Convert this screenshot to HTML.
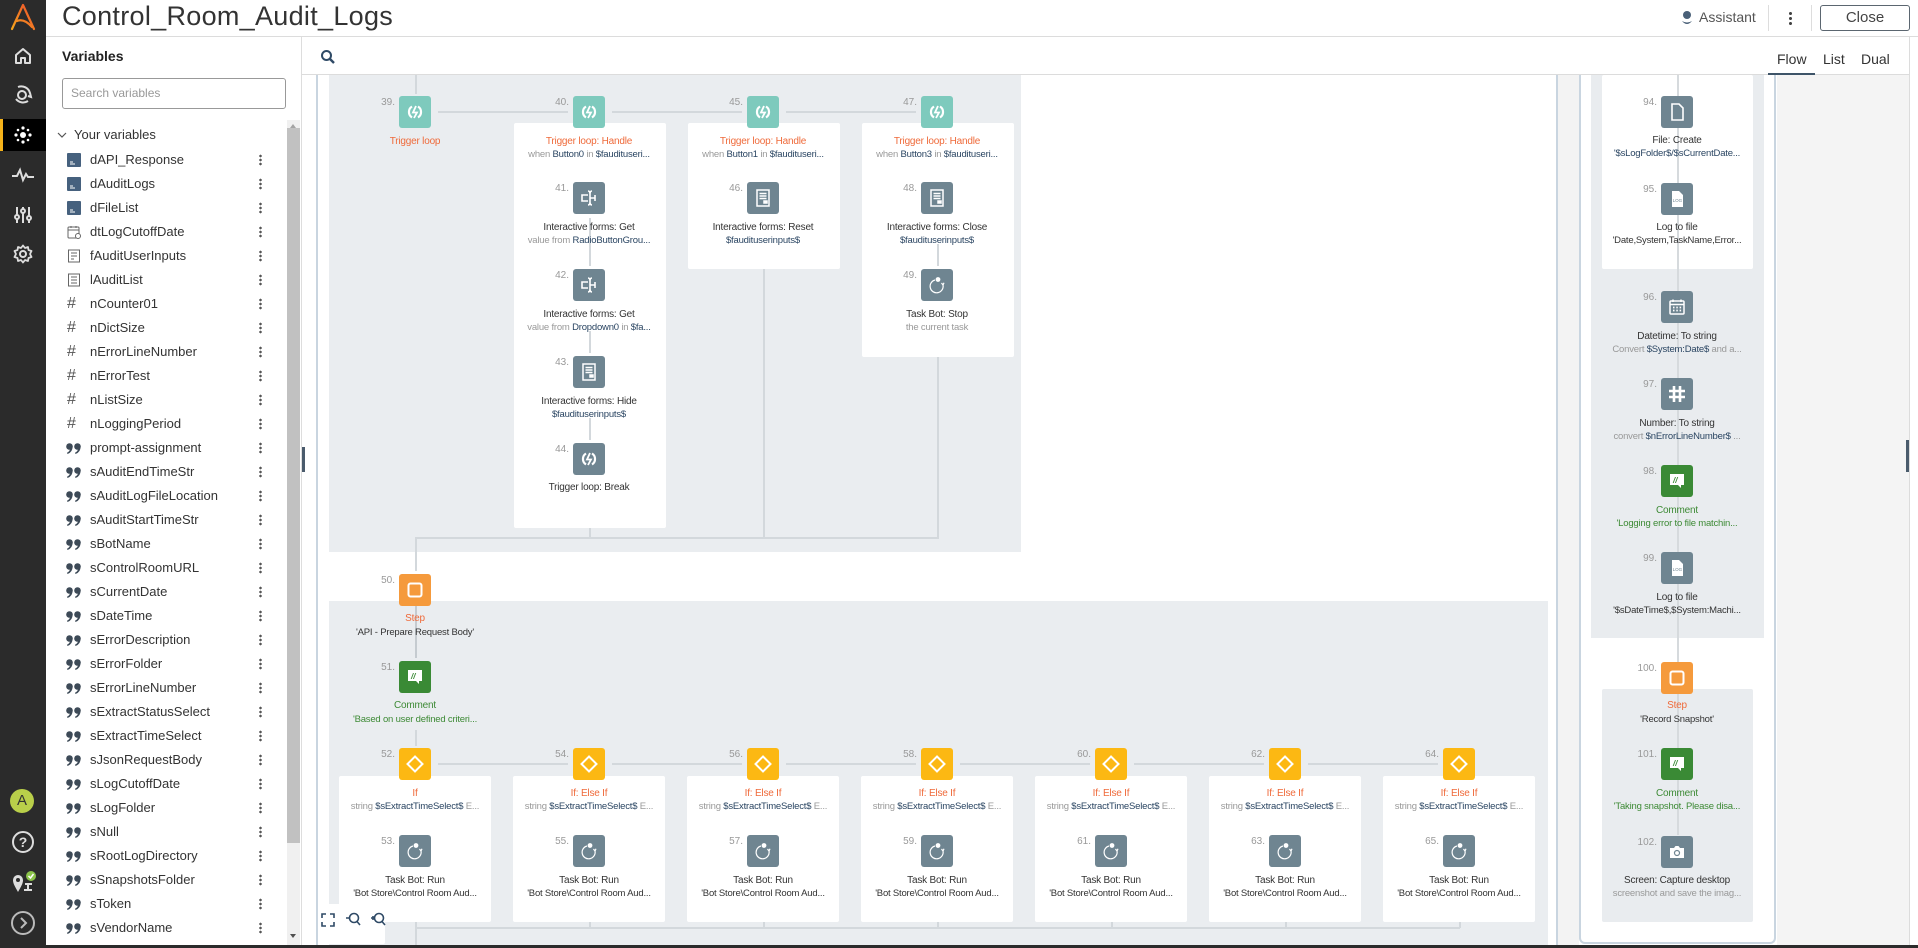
<!DOCTYPE html>
<html><head><meta charset="utf-8">
<style>
*{margin:0;padding:0;box-sizing:border-box}
body{width:1918px;height:948px;overflow:hidden;position:relative;background:#fff;font-family:"Liberation Sans",sans-serif;color:#333}
.a{position:absolute}
.nav{left:0;top:0;width:46px;height:948px;background:#2b2b2b}
.ln{position:absolute;background:#d3d8dc}
.ic{position:absolute;width:32px;height:32px;border-radius:3px}
.ic svg{position:absolute;left:6px;top:6px;width:20px;height:20px}
.teal{background:#7ecabd}.gray{background:#6f8591}.orng{background:#f59a3c}.grn{background:#3a8a35}.yel{background:#fcb813}
.num{position:absolute;width:30px;text-align:right;font-size:10px;color:#999}
.t{position:absolute;width:170px;text-align:center;font-size:10px;line-height:12px;color:#333;white-space:nowrap;letter-spacing:-0.2px}
.s{position:absolute;width:170px;text-align:center;font-size:9.5px;line-height:12px;color:#999;white-space:nowrap;letter-spacing:-0.2px}
.o{color:#ef6a3a}.g{color:#3d8a35}.v{color:#2a4562}.d{color:#333}
.card{position:absolute;background:#fff;border-radius:2px}
.var{position:absolute;left:62px;height:24px;width:215px;font-size:13px;line-height:24px;color:#333}
.var .vi{position:absolute;left:5px;top:5px;width:14px;height:14px}
.var .q{position:absolute;left:4px;top:7px;width:16px;height:11px}
.var span.n{position:absolute;left:28px}
.var .k{position:absolute;left:197px;top:6px;width:3px;height:12px;background:radial-gradient(circle,#555 1.2px,transparent 1.4px) 0 0/3px 4px}
</style></head><body>
<svg width="0" height="0" style="position:absolute"><defs><g id="qq" fill="#3d4a57"><circle cx="3.5" cy="3.5" r="3.3"/><path d="M6.5 3.5 Q6.8 9 1.5 11 L1 9.8 Q4 8.2 4 5.5Z"/><circle cx="11.5" cy="3.5" r="3.3"/><path d="M14.5 3.5 Q14.8 9 9.5 11 L9 9.8 Q12 8.2 12 5.5Z"/></g></defs></svg>

<!-- nav -->
<div class="a nav"></div>
<svg class="a" style="left:8px;top:2px" width="30" height="30" viewBox="0 0 30 30"><defs><linearGradient id="lg" x1="0" y1="1" x2="1" y2="0"><stop offset="0" stop-color="#f7a51c"/><stop offset="1" stop-color="#ee4d2d"/></linearGradient></defs><path d="M4 27 L15 3 L26 27 M9 19 Q16 16 24 25" stroke="url(#lg)" stroke-width="2.2" fill="none" stroke-linecap="round" stroke-linejoin="round"/></svg>
<svg class="a" style="left:13px;top:47px" width="20" height="18" viewBox="0 0 20 18"><path d="M3 8 L10 2 L17 8 V16 H12 V11 H8 V16 H3 Z" stroke="#ddd" stroke-width="2" fill="none" stroke-linejoin="round"/></svg>
<svg class="a" style="left:13px;top:84px" width="20" height="20" viewBox="0 0 20 20"><circle cx="9" cy="11" r="4" stroke="#ddd" stroke-width="2" fill="none"/><path d="M5 3 A9 9 0 0 1 17 9 M3 15 A9 9 0 0 0 15 17 M17 9 l1 4 -3 -1" stroke="#ddd" stroke-width="2" fill="none"/></svg>
<div class="a" style="left:0;top:119px;width:46px;height:32px;background:#000"></div>
<div class="a" style="left:0;top:119px;width:3px;height:32px;background:#f5b21a"></div>
<svg class="a" style="left:13px;top:125px" width="20" height="20" viewBox="0 0 20 20" fill="#fff"><circle cx="10" cy="10" r="3"/><circle cx="10" cy="3" r="1.6"/><circle cx="10" cy="17" r="1.6"/><circle cx="3" cy="10" r="1.6"/><circle cx="17" cy="10" r="1.6"/><circle cx="5" cy="5" r="1.3"/><circle cx="15" cy="5" r="1.3"/><circle cx="5" cy="15" r="1.3"/><circle cx="15" cy="15" r="1.3"/></svg>
<svg class="a" style="left:11px;top:167px" width="24" height="16" viewBox="0 0 24 16"><path d="M1 9 H6 L9 3 L12 13 L15 7 L17 10 H23" stroke="#ddd" stroke-width="2" fill="none"/></svg>
<svg class="a" style="left:13px;top:205px" width="20" height="20" viewBox="0 0 20 20" stroke="#ddd" stroke-width="2" fill="none"><path d="M4 2V18M10 2V18M16 2V18"/><circle cx="4" cy="12" r="2" fill="#2b2b2b"/><circle cx="10" cy="6" r="2" fill="#2b2b2b"/><circle cx="16" cy="13" r="2" fill="#2b2b2b"/></svg>
<svg class="a" style="left:13px;top:244px" width="20" height="20" viewBox="0 0 20 20"><circle cx="10" cy="10" r="3" stroke="#ddd" stroke-width="2" fill="none"/><path d="M10 1.5 L12 4 L15 3 L15.5 6 L18.5 7 L17 10 L18.5 13 L15.5 14 L15 17 L12 16 L10 18.5 L8 16 L5 17 L4.5 14 L1.5 13 L3 10 L1.5 7 L4.5 6 L5 3 L8 4 Z" stroke="#ddd" stroke-width="1.8" fill="none" stroke-linejoin="round"/></svg>
<div class="a" style="left:10px;top:789px;width:24px;height:24px;border-radius:50%;background:#b9cf4a;color:#333;font-size:15px;text-align:center;line-height:24px">A</div>
<div class="a" style="left:12px;top:831px;width:22px;height:22px;border-radius:50%;border:2px solid #ddd;color:#ddd;font-size:14px;font-weight:bold;text-align:center;line-height:18px">?</div>
<svg class="a" style="left:11px;top:870px" width="26" height="24" viewBox="0 0 26 24"><path d="M7 22 C3 15 2 13 2 10 A5 5 0 0 1 12 10 C12 13 11 15 7 22Z" fill="#ddd"/><circle cx="7" cy="10" r="2" fill="#2b2b2b"/><path d="M14 14 H21 M17 14 V20 M13 20 H21" stroke="#ddd" stroke-width="2"/><circle cx="20" cy="6" r="5" fill="#8bc34a"/><path d="M17.5 6 L19.5 8 L22.5 4" stroke="#fff" stroke-width="1.5" fill="none"/></svg>
<div class="a" style="left:11px;top:911px;width:24px;height:24px;border-radius:50%;border:2px solid #bbb"></div>
<svg class="a" style="left:18px;top:917px" width="10" height="12" viewBox="0 0 10 12"><path d="M3 1 L8 6 L3 11" stroke="#bbb" stroke-width="2" fill="none"/></svg>

<!-- header -->
<div class="a" style="left:46px;top:0;width:1872px;height:37px;border-bottom:1px solid #dcdcdc;background:#fff"></div>
<div class="a" style="left:62px;top:1px;font-size:27px;color:#333;letter-spacing:0.3px">Control_Room_Audit_Logs</div>
<svg class="a" style="left:1681px;top:10px" width="12" height="16" viewBox="0 0 12 16"><circle cx="6" cy="5" r="4" fill="#4a6078"/><path d="M1 11 Q6 17 11 11 Q6 14 1 11Z" fill="#4a6078"/></svg>
<div class="a" style="left:1699px;top:9px;font-size:14px;color:#555">Assistant</div>
<div class="a" style="left:1768px;top:5px;width:1px;height:26px;background:#ddd"></div>
<div class="a" style="left:1789px;top:11px;width:3px;height:14px;background:radial-gradient(circle,#444 1.4px,transparent 1.6px) 0 0/3px 5px"></div>
<div class="a" style="left:1811px;top:5px;width:1px;height:26px;background:#ddd"></div>
<div class="a" style="left:1820px;top:5px;width:90px;height:26px;border:1px solid #5b6670;border-radius:3px;font-size:15px;text-align:center;line-height:24px;color:#444">Close</div>

<!-- variables panel -->
<div class="a" style="left:301px;top:37px;width:1px;height:911px;background:#ddd"></div>
<div class="a" style="left:62px;top:48px;font-size:14px;font-weight:bold;color:#222">Variables</div>
<div class="a" style="left:62px;top:78px;width:224px;height:31px;border:1px solid #999;border-radius:3px;font-size:12px;color:#999;padding:7px 8px">Search variables</div>
<div class="a" style="left:287px;top:120px;width:13px;height:825px;background:#f0f0f0"></div>
<div class="a" style="left:287px;top:128px;width:13px;height:715px;background:#c1c1c1"></div>
<div class="a" style="left:290px;top:124px;width:0;height:0;border:3.5px solid transparent;border-bottom:4px solid #a3a3a3;border-top:0"></div>
<div class="a" style="left:290px;top:934px;width:0;height:0;border:3.5px solid transparent;border-top:4px solid #505050;border-bottom:0"></div>
<svg class="a" style="left:57px;top:131px" width="10" height="8" viewBox="0 0 10 8"><path d="M1 2 L5 6 L9 2" stroke="#555" stroke-width="1.2" fill="none"/></svg>
<div class="a" style="left:74px;top:127px;font-size:13px;color:#333">Your variables</div>

<div id="vars">
<div class="var" style="top:148px"><svg class="vi" viewBox="0 0 14 14"><rect width="14" height="14" rx="1" fill="#46617e"/><path d="M3 9h3M3 11h5" stroke="#fff" stroke-width="1"/></svg><span class="n">dAPI_Response</span><i class="k"></i></div>
<div class="var" style="top:172px"><svg class="vi" viewBox="0 0 14 14"><rect width="14" height="14" rx="1" fill="#46617e"/><path d="M3 9h3M3 11h5" stroke="#fff" stroke-width="1"/></svg><span class="n">dAuditLogs</span><i class="k"></i></div>
<div class="var" style="top:196px"><svg class="vi" viewBox="0 0 14 14"><rect width="14" height="14" rx="1" fill="#46617e"/><path d="M3 9h3M3 11h5" stroke="#fff" stroke-width="1"/></svg><span class="n">dFileList</span><i class="k"></i></div>
<div class="var" style="top:220px"><svg class="vi" viewBox="0 0 14 14" fill="none" stroke="#666"><rect x="1" y="2" width="11" height="11" rx="1"/><path d="M1 5h11M4 1v2M9 1v2"/><circle cx="11" cy="11" r="2.5" fill="#fff"/></svg><span class="n">dtLogCutoffDate</span><i class="k"></i></div>
<div class="var" style="top:244px"><svg class="vi" viewBox="0 0 14 14" fill="none" stroke="#666"><rect x="1.5" y="1" width="11" height="12"/><path d="M4 4h6M4 7h6M4 10h3"/></svg><span class="n">fAuditUserInputs</span><i class="k"></i></div>
<div class="var" style="top:268px"><svg class="vi" viewBox="0 0 14 14" fill="none" stroke="#666"><rect x="1.5" y="1" width="11" height="12"/><path d="M4 4h6M4 7h6M4 10h6"/></svg><span class="n">lAuditList</span><i class="k"></i></div>
<div class="var" style="top:292px"><span class="a" style="left:5px;top:0;font-size:16px;color:#555">#</span><span class="n">nCounter01</span><i class="k"></i></div>
<div class="var" style="top:316px"><span class="a" style="left:5px;top:0;font-size:16px;color:#555">#</span><span class="n">nDictSize</span><i class="k"></i></div>
<div class="var" style="top:340px"><span class="a" style="left:5px;top:0;font-size:16px;color:#555">#</span><span class="n">nErrorLineNumber</span><i class="k"></i></div>
<div class="var" style="top:364px"><span class="a" style="left:5px;top:0;font-size:16px;color:#555">#</span><span class="n">nErrorTest</span><i class="k"></i></div>
<div class="var" style="top:388px"><span class="a" style="left:5px;top:0;font-size:16px;color:#555">#</span><span class="n">nListSize</span><i class="k"></i></div>
<div class="var" style="top:412px"><span class="a" style="left:5px;top:0;font-size:16px;color:#555">#</span><span class="n">nLoggingPeriod</span><i class="k"></i></div>
<div class="var" style="top:436px"><svg class="q" viewBox="0 0 16 11"><use href="#qq"/></svg><span class="n">prompt-assignment</span><i class="k"></i></div>
<div class="var" style="top:460px"><svg class="q" viewBox="0 0 16 11"><use href="#qq"/></svg><span class="n">sAuditEndTimeStr</span><i class="k"></i></div>
<div class="var" style="top:484px"><svg class="q" viewBox="0 0 16 11"><use href="#qq"/></svg><span class="n">sAuditLogFileLocation</span><i class="k"></i></div>
<div class="var" style="top:508px"><svg class="q" viewBox="0 0 16 11"><use href="#qq"/></svg><span class="n">sAuditStartTimeStr</span><i class="k"></i></div>
<div class="var" style="top:532px"><svg class="q" viewBox="0 0 16 11"><use href="#qq"/></svg><span class="n">sBotName</span><i class="k"></i></div>
<div class="var" style="top:556px"><svg class="q" viewBox="0 0 16 11"><use href="#qq"/></svg><span class="n">sControlRoomURL</span><i class="k"></i></div>
<div class="var" style="top:580px"><svg class="q" viewBox="0 0 16 11"><use href="#qq"/></svg><span class="n">sCurrentDate</span><i class="k"></i></div>
<div class="var" style="top:604px"><svg class="q" viewBox="0 0 16 11"><use href="#qq"/></svg><span class="n">sDateTime</span><i class="k"></i></div>
<div class="var" style="top:628px"><svg class="q" viewBox="0 0 16 11"><use href="#qq"/></svg><span class="n">sErrorDescription</span><i class="k"></i></div>
<div class="var" style="top:652px"><svg class="q" viewBox="0 0 16 11"><use href="#qq"/></svg><span class="n">sErrorFolder</span><i class="k"></i></div>
<div class="var" style="top:676px"><svg class="q" viewBox="0 0 16 11"><use href="#qq"/></svg><span class="n">sErrorLineNumber</span><i class="k"></i></div>
<div class="var" style="top:700px"><svg class="q" viewBox="0 0 16 11"><use href="#qq"/></svg><span class="n">sExtractStatusSelect</span><i class="k"></i></div>
<div class="var" style="top:724px"><svg class="q" viewBox="0 0 16 11"><use href="#qq"/></svg><span class="n">sExtractTimeSelect</span><i class="k"></i></div>
<div class="var" style="top:748px"><svg class="q" viewBox="0 0 16 11"><use href="#qq"/></svg><span class="n">sJsonRequestBody</span><i class="k"></i></div>
<div class="var" style="top:772px"><svg class="q" viewBox="0 0 16 11"><use href="#qq"/></svg><span class="n">sLogCutoffDate</span><i class="k"></i></div>
<div class="var" style="top:796px"><svg class="q" viewBox="0 0 16 11"><use href="#qq"/></svg><span class="n">sLogFolder</span><i class="k"></i></div>
<div class="var" style="top:820px"><svg class="q" viewBox="0 0 16 11"><use href="#qq"/></svg><span class="n">sNull</span><i class="k"></i></div>
<div class="var" style="top:844px"><svg class="q" viewBox="0 0 16 11"><use href="#qq"/></svg><span class="n">sRootLogDirectory</span><i class="k"></i></div>
<div class="var" style="top:868px"><svg class="q" viewBox="0 0 16 11"><use href="#qq"/></svg><span class="n">sSnapshotsFolder</span><i class="k"></i></div>
<div class="var" style="top:892px"><svg class="q" viewBox="0 0 16 11"><use href="#qq"/></svg><span class="n">sToken</span><i class="k"></i></div>
<div class="var" style="top:916px"><svg class="q" viewBox="0 0 16 11"><use href="#qq"/></svg><span class="n">sVendorName</span><i class="k"></i></div>
</div>

<!-- canvas toolbar -->
<div class="a" style="left:302px;top:74px;width:1607px;height:1px;background:#dcdcdc"></div>
<svg class="a" style="left:320px;top:49px" width="16" height="16" viewBox="0 0 16 16"><circle cx="6.5" cy="6.5" r="4.5" stroke="#2f4a66" stroke-width="2" fill="none"/><path d="M10 10 L14 14" stroke="#2f4a66" stroke-width="2.4"/></svg>
<div class="a" style="left:1777px;top:51px;font-size:14px;color:#333">Flow</div>
<div class="a" style="left:1823px;top:51px;font-size:14px;color:#333">List</div>
<div class="a" style="left:1861px;top:51px;font-size:14px;color:#333">Dual</div>
<div class="a" style="left:1768px;top:73px;width:47px;height:2px;background:#3e5468"></div>
<div class="a" style="left:1909px;top:37px;width:1px;height:911px;background:#dcdcdc"></div>

<!-- canvas frame -->
<div class="a" style="left:316px;top:75px;width:2px;height:873px;background:#c9d5e0"></div>
<div class="a" style="left:302px;top:447px;width:3px;height:25px;background:#4a5b6c"></div>
<div class="a" style="left:1556px;top:75px;width:2px;height:873px;background:#c9d5e0"></div>
<div class="a" style="left:1558px;top:75px;width:21px;height:873px;background:#f3f3f3"></div>
<div class="a" style="left:1579px;top:75px;width:197px;height:869px;border:2px solid #c9d5e0;border-top:none;border-radius:0 0 6px 6px;background:#fff"></div>
<div class="a" style="left:1777px;top:75px;width:132px;height:873px;background:#f4f4f4"></div>
<div class="a" style="left:1906px;top:440px;width:3px;height:32px;background:#4a5b6c"></div>

<!-- top container -->
<div class="a" style="left:329px;top:75px;width:692px;height:477px;background:#eaedf0"></div>
<div class="card" style="left:514px;top:123px;width:152px;height:405px"></div>
<div class="card" style="left:688px;top:123px;width:152px;height:146px"></div>
<div class="card" style="left:862px;top:123px;width:152px;height:234px"></div>
<div class="ln" style="left:415px;top:75px;width:1.5px;height:19px"></div>
<div class="ln" style="left:438px;top:111px;width:130px;height:1.5px"></div>
<div class="ln" style="left:612px;top:111px;width:130px;height:1.5px"></div>
<div class="ln" style="left:786px;top:111px;width:130px;height:1.5px"></div>
<div class="ln" style="left:589px;top:218px;width:1.5px;height:48px"></div>
<div class="ln" style="left:589px;top:331px;width:1.5px;height:22px"></div>
<div class="ln" style="left:589px;top:418px;width:1.5px;height:22px"></div>
<div class="ln" style="left:937px;top:244px;width:1.5px;height:22px"></div>
<div class="ln" style="left:589px;top:528px;width:1.5px;height:10px"></div>
<div class="ln" style="left:763px;top:269px;width:1.5px;height:269px"></div>
<div class="ln" style="left:937px;top:357px;width:1.5px;height:181px"></div>
<div class="ln" style="left:415px;top:537px;width:524px;height:1.5px"></div>
<div class="ln" style="left:415px;top:537px;width:1.5px;height:34px"></div>

<!-- bottom container -->
<div class="a" style="left:329px;top:601px;width:1219px;height:347px;background:#eaedf0"></div>
<div class="ln" style="left:415px;top:606px;width:1.5px;height:52px;background:#c5cbd0"></div>
<div class="ln" style="left:415px;top:730px;width:1.5px;height:16px"></div>
<div class="card" style="left:339px;top:776px;width:152px;height:146px"></div>
<div class="card" style="left:513px;top:776px;width:152px;height:146px"></div>
<div class="card" style="left:687px;top:776px;width:152px;height:146px"></div>
<div class="card" style="left:861px;top:776px;width:152px;height:146px"></div>
<div class="card" style="left:1035px;top:776px;width:152px;height:146px"></div>
<div class="card" style="left:1209px;top:776px;width:152px;height:146px"></div>
<div class="card" style="left:1383px;top:776px;width:152px;height:146px"></div>
<div class="ln" style="left:438px;top:763px;width:130px;height:1.5px"></div>
<div class="ln" style="left:612px;top:763px;width:130px;height:1.5px"></div>
<div class="ln" style="left:786px;top:763px;width:130px;height:1.5px"></div>
<div class="ln" style="left:960px;top:763px;width:130px;height:1.5px"></div>
<div class="ln" style="left:1134px;top:763px;width:130px;height:1.5px"></div>
<div class="ln" style="left:1308px;top:763px;width:130px;height:1.5px"></div>
<div class="ln" style="left:415px;top:927px;width:1045px;height:1.5px"></div>
<div class="ln" style="left:415px;top:922px;width:1.5px;height:26px"></div>
<div class="ln" style="left:589px;top:922px;width:1.5px;height:6px"></div>
<div class="ln" style="left:763px;top:922px;width:1.5px;height:6px"></div>
<div class="ln" style="left:937px;top:922px;width:1.5px;height:6px"></div>
<div class="ln" style="left:1111px;top:922px;width:1.5px;height:6px"></div>
<div class="ln" style="left:1285px;top:922px;width:1.5px;height:6px"></div>
<div class="ln" style="left:1459px;top:922px;width:1.5px;height:6px"></div>

<!-- right pane containers -->
<div class="a" style="left:1591px;top:75px;width:173px;height:563px;background:#e9ecef"></div>
<div class="card" style="left:1602px;top:75px;width:151px;height:194px"></div>
<div class="a" style="left:1602px;top:689px;width:151px;height:233px;background:#e9ecef;border-radius:2px"></div>
<div class="ln" style="left:1677px;top:75px;width:1.5px;height:760px;background:#d6dadd"></div>

<!-- NODES -->
<div class="num" style="left:365px;top:97px">39.</div><div class="ic teal" style="left:399px;top:96px"><svg viewBox="0 0 20 20" fill="none" stroke="#fff" stroke-width="2.2"><path d="M7 4.5 A6.5 6.5 0 0 0 7 15.5 M13 4.5 A6.5 6.5 0 0 1 13 15.5"/><path d="M11 4 L8 10.5 H12 L9 16" stroke-width="1.8"/></svg></div>
<div class="t o" style="left:330px;top:136px">Trigger loop</div>

<div class="num" style="left:539px;top:97px">40.</div><div class="ic teal" style="left:573px;top:96px"><svg viewBox="0 0 20 20" fill="none" stroke="#fff" stroke-width="2.2"><path d="M7 4.5 A6.5 6.5 0 0 0 7 15.5 M13 4.5 A6.5 6.5 0 0 1 13 15.5"/><path d="M11 4 L8 10.5 H12 L9 16" stroke-width="1.8"/></svg></div>
<div class="t o" style="left:504px;top:136px">Trigger loop: Handle</div>
<div class="s" style="left:504px;top:149px">when <span class="v">Button0</span> in <span class="v">$faudituseri...</span></div>

<div class="num" style="left:713px;top:97px">45.</div><div class="ic teal" style="left:747px;top:96px"><svg viewBox="0 0 20 20" fill="none" stroke="#fff" stroke-width="2.2"><path d="M7 4.5 A6.5 6.5 0 0 0 7 15.5 M13 4.5 A6.5 6.5 0 0 1 13 15.5"/><path d="M11 4 L8 10.5 H12 L9 16" stroke-width="1.8"/></svg></div>
<div class="t o" style="left:678px;top:136px">Trigger loop: Handle</div>
<div class="s" style="left:678px;top:149px">when <span class="v">Button1</span> in <span class="v">$faudituseri...</span></div>

<div class="num" style="left:887px;top:97px">47.</div><div class="ic teal" style="left:921px;top:96px"><svg viewBox="0 0 20 20" fill="none" stroke="#fff" stroke-width="2.2"><path d="M7 4.5 A6.5 6.5 0 0 0 7 15.5 M13 4.5 A6.5 6.5 0 0 1 13 15.5"/><path d="M11 4 L8 10.5 H12 L9 16" stroke-width="1.8"/></svg></div>
<div class="t o" style="left:852px;top:136px">Trigger loop: Handle</div>
<div class="s" style="left:852px;top:149px">when <span class="v">Button3</span> in <span class="v">$faudituseri...</span></div>

<div class="num" style="left:539px;top:183px">41.</div><div class="ic gray" style="left:573px;top:182px"><svg viewBox="0 0 20 20" fill="none" stroke="#fff" stroke-width="1.6"><path d="M9 7 H3 V13 H9 M13 3 Q11 3 11 6 V14 Q11 17 13 17 M9 3 Q11 3 11 6 M9 17 Q11 17 11 14 M11 10 H16 V7 M11 10 H16 V13"/></svg></div>
<div class="t d" style="left:504px;top:222px">Interactive forms: Get</div>
<div class="s" style="left:504px;top:235px">value from <span class="v">RadioButtonGrou...</span></div>

<div class="num" style="left:539px;top:270px">42.</div><div class="ic gray" style="left:573px;top:269px"><svg viewBox="0 0 20 20" fill="none" stroke="#fff" stroke-width="1.6"><path d="M9 7 H3 V13 H9 M13 3 Q11 3 11 6 V14 Q11 17 13 17 M9 3 Q11 3 11 6 M9 17 Q11 17 11 14 M11 10 H16 V7 M11 10 H16 V13"/></svg></div>
<div class="t d" style="left:504px;top:309px">Interactive forms: Get</div>
<div class="s" style="left:504px;top:322px">value from <span class="v">Dropdown0</span> in <span class="v">$fa...</span></div>

<div class="num" style="left:539px;top:357px">43.</div><div class="ic gray" style="left:573px;top:356px"><svg viewBox="0 0 20 20" fill="none" stroke="#fff" stroke-width="1.5"><rect x="4" y="2" width="12" height="16"/><path d="M6.5 5.5h7M6.5 8h7M6.5 10.5h7"/><rect x="11" y="13" width="3" height="2" fill="#fff"/></svg></div>
<div class="t d" style="left:504px;top:396px">Interactive forms: Hide</div>
<div class="s" style="left:504px;top:409px"><span class="v">$faudituserinputs$</span></div>

<div class="num" style="left:539px;top:444px">44.</div><div class="ic gray" style="left:573px;top:443px"><svg viewBox="0 0 20 20" fill="none" stroke="#fff" stroke-width="2.2"><path d="M7 4.5 A6.5 6.5 0 0 0 7 15.5 M13 4.5 A6.5 6.5 0 0 1 13 15.5"/><path d="M11 4 L8 10.5 H12 L9 16" stroke-width="1.8"/></svg></div>
<div class="t d" style="left:504px;top:482px">Trigger loop: Break</div>

<div class="num" style="left:713px;top:183px">46.</div><div class="ic gray" style="left:747px;top:182px"><svg viewBox="0 0 20 20" fill="none" stroke="#fff" stroke-width="1.5"><rect x="4" y="2" width="12" height="16"/><path d="M6.5 5.5h7M6.5 8h7M6.5 10.5h7"/><rect x="11" y="13" width="3" height="2" fill="#fff"/></svg></div>
<div class="t d" style="left:678px;top:222px">Interactive forms: Reset</div>
<div class="s" style="left:678px;top:235px"><span class="v">$faudituserinputs$</span></div>

<div class="num" style="left:887px;top:183px">48.</div><div class="ic gray" style="left:921px;top:182px"><svg viewBox="0 0 20 20" fill="none" stroke="#fff" stroke-width="1.5"><rect x="4" y="2" width="12" height="16"/><path d="M6.5 5.5h7M6.5 8h7M6.5 10.5h7"/><rect x="11" y="13" width="3" height="2" fill="#fff"/></svg></div>
<div class="t d" style="left:852px;top:222px">Interactive forms: Close</div>
<div class="s" style="left:852px;top:235px"><span class="v">$faudituserinputs$</span></div>

<div class="num" style="left:887px;top:270px">49.</div><div class="ic gray" style="left:921px;top:269px"><svg viewBox="0 0 20 20" fill="none" stroke="#fff" stroke-width="1.2"><path d="M8 5 A6.5 6.5 0 1 0 16 10"/><path d="M16 10 l-1.5 -2 M16 10 l1 -2.2"/><circle cx="11" cy="4.5" r="1.8" fill="#fff"/></svg></div>
<div class="t d" style="left:852px;top:309px">Task Bot: Stop</div>
<div class="s" style="left:852px;top:322px">the current task</div>

<div class="num" style="left:365px;top:575px">50.</div><div class="ic orng" style="left:399px;top:574px"><svg viewBox="0 0 20 20"><rect x="3.5" y="3.5" width="13" height="13" rx="2" fill="none" stroke="#fff" stroke-width="2"/></svg></div>
<div class="t o" style="left:330px;top:613px">Step</div>
<div class="s d" style="left:330px;top:627px">'API - Prepare Request Body'</div>

<div class="num" style="left:365px;top:662px">51.</div><div class="ic grn" style="left:399px;top:661px"><svg viewBox="0 0 20 20"><path d="M3 3 H17 V14 H14 V17 L11 14 H3 Z" fill="#fff"/><text x="6" y="12" font-size="8" font-style="italic" font-weight="bold" fill="#3a8a35" font-family="Liberation Sans">//</text></svg></div>
<div class="t g" style="left:330px;top:700px">Comment</div>
<div class="s g" style="left:330px;top:714px">'Based on user defined criteri...</div>

<div class="num" style="left:365px;top:749px">52.</div><div class="ic yel" style="left:399px;top:748px"><svg viewBox="0 0 20 20"><path d="M10 2.5 L17.5 10 L10 17.5 L2.5 10 Z" fill="none" stroke="#fff" stroke-width="2"/></svg></div>
<div class="t o" style="left:330px;top:788px">If</div><div class="s" style="left:330px;top:801px">string <span class="v">$sExtractTimeSelect$</span> E...</div>
<div class="num" style="left:539px;top:749px">54.</div><div class="ic yel" style="left:573px;top:748px"><svg viewBox="0 0 20 20"><path d="M10 2.5 L17.5 10 L10 17.5 L2.5 10 Z" fill="none" stroke="#fff" stroke-width="2"/></svg></div>
<div class="t o" style="left:504px;top:788px">If: Else If</div><div class="s" style="left:504px;top:801px">string <span class="v">$sExtractTimeSelect$</span> E...</div>
<div class="num" style="left:713px;top:749px">56.</div><div class="ic yel" style="left:747px;top:748px"><svg viewBox="0 0 20 20"><path d="M10 2.5 L17.5 10 L10 17.5 L2.5 10 Z" fill="none" stroke="#fff" stroke-width="2"/></svg></div>
<div class="t o" style="left:678px;top:788px">If: Else If</div><div class="s" style="left:678px;top:801px">string <span class="v">$sExtractTimeSelect$</span> E...</div>
<div class="num" style="left:887px;top:749px">58.</div><div class="ic yel" style="left:921px;top:748px"><svg viewBox="0 0 20 20"><path d="M10 2.5 L17.5 10 L10 17.5 L2.5 10 Z" fill="none" stroke="#fff" stroke-width="2"/></svg></div>
<div class="t o" style="left:852px;top:788px">If: Else If</div><div class="s" style="left:852px;top:801px">string <span class="v">$sExtractTimeSelect$</span> E...</div>
<div class="num" style="left:1061px;top:749px">60.</div><div class="ic yel" style="left:1095px;top:748px"><svg viewBox="0 0 20 20"><path d="M10 2.5 L17.5 10 L10 17.5 L2.5 10 Z" fill="none" stroke="#fff" stroke-width="2"/></svg></div>
<div class="t o" style="left:1026px;top:788px">If: Else If</div><div class="s" style="left:1026px;top:801px">string <span class="v">$sExtractTimeSelect$</span> E...</div>
<div class="num" style="left:1235px;top:749px">62.</div><div class="ic yel" style="left:1269px;top:748px"><svg viewBox="0 0 20 20"><path d="M10 2.5 L17.5 10 L10 17.5 L2.5 10 Z" fill="none" stroke="#fff" stroke-width="2"/></svg></div>
<div class="t o" style="left:1200px;top:788px">If: Else If</div><div class="s" style="left:1200px;top:801px">string <span class="v">$sExtractTimeSelect$</span> E...</div>
<div class="num" style="left:1409px;top:749px">64.</div><div class="ic yel" style="left:1443px;top:748px"><svg viewBox="0 0 20 20"><path d="M10 2.5 L17.5 10 L10 17.5 L2.5 10 Z" fill="none" stroke="#fff" stroke-width="2"/></svg></div>
<div class="t o" style="left:1374px;top:788px">If: Else If</div><div class="s" style="left:1374px;top:801px">string <span class="v">$sExtractTimeSelect$</span> E...</div>

<div class="num" style="left:365px;top:836px">53.</div><div class="ic gray" style="left:399px;top:835px"><svg viewBox="0 0 20 20" fill="none" stroke="#fff" stroke-width="1.2"><path d="M8 5 A6.5 6.5 0 1 0 16 10"/><path d="M16 10 l-1.5 -2 M16 10 l1 -2.2"/><circle cx="11" cy="4.5" r="1.8" fill="#fff"/></svg></div>
<div class="t d" style="left:330px;top:875px">Task Bot: Run</div><div class="s d" style="left:330px;top:888px">'Bot Store\Control Room Aud...</div>
<div class="num" style="left:539px;top:836px">55.</div><div class="ic gray" style="left:573px;top:835px"><svg viewBox="0 0 20 20" fill="none" stroke="#fff" stroke-width="1.2"><path d="M8 5 A6.5 6.5 0 1 0 16 10"/><path d="M16 10 l-1.5 -2 M16 10 l1 -2.2"/><circle cx="11" cy="4.5" r="1.8" fill="#fff"/></svg></div>
<div class="t d" style="left:504px;top:875px">Task Bot: Run</div><div class="s d" style="left:504px;top:888px">'Bot Store\Control Room Aud...</div>
<div class="num" style="left:713px;top:836px">57.</div><div class="ic gray" style="left:747px;top:835px"><svg viewBox="0 0 20 20" fill="none" stroke="#fff" stroke-width="1.2"><path d="M8 5 A6.5 6.5 0 1 0 16 10"/><path d="M16 10 l-1.5 -2 M16 10 l1 -2.2"/><circle cx="11" cy="4.5" r="1.8" fill="#fff"/></svg></div>
<div class="t d" style="left:678px;top:875px">Task Bot: Run</div><div class="s d" style="left:678px;top:888px">'Bot Store\Control Room Aud...</div>
<div class="num" style="left:887px;top:836px">59.</div><div class="ic gray" style="left:921px;top:835px"><svg viewBox="0 0 20 20" fill="none" stroke="#fff" stroke-width="1.2"><path d="M8 5 A6.5 6.5 0 1 0 16 10"/><path d="M16 10 l-1.5 -2 M16 10 l1 -2.2"/><circle cx="11" cy="4.5" r="1.8" fill="#fff"/></svg></div>
<div class="t d" style="left:852px;top:875px">Task Bot: Run</div><div class="s d" style="left:852px;top:888px">'Bot Store\Control Room Aud...</div>
<div class="num" style="left:1061px;top:836px">61.</div><div class="ic gray" style="left:1095px;top:835px"><svg viewBox="0 0 20 20" fill="none" stroke="#fff" stroke-width="1.2"><path d="M8 5 A6.5 6.5 0 1 0 16 10"/><path d="M16 10 l-1.5 -2 M16 10 l1 -2.2"/><circle cx="11" cy="4.5" r="1.8" fill="#fff"/></svg></div>
<div class="t d" style="left:1026px;top:875px">Task Bot: Run</div><div class="s d" style="left:1026px;top:888px">'Bot Store\Control Room Aud...</div>
<div class="num" style="left:1235px;top:836px">63.</div><div class="ic gray" style="left:1269px;top:835px"><svg viewBox="0 0 20 20" fill="none" stroke="#fff" stroke-width="1.2"><path d="M8 5 A6.5 6.5 0 1 0 16 10"/><path d="M16 10 l-1.5 -2 M16 10 l1 -2.2"/><circle cx="11" cy="4.5" r="1.8" fill="#fff"/></svg></div>
<div class="t d" style="left:1200px;top:875px">Task Bot: Run</div><div class="s d" style="left:1200px;top:888px">'Bot Store\Control Room Aud...</div>
<div class="num" style="left:1409px;top:836px">65.</div><div class="ic gray" style="left:1443px;top:835px"><svg viewBox="0 0 20 20" fill="none" stroke="#fff" stroke-width="1.2"><path d="M8 5 A6.5 6.5 0 1 0 16 10"/><path d="M16 10 l-1.5 -2 M16 10 l1 -2.2"/><circle cx="11" cy="4.5" r="1.8" fill="#fff"/></svg></div>
<div class="t d" style="left:1374px;top:875px">Task Bot: Run</div><div class="s d" style="left:1374px;top:888px">'Bot Store\Control Room Aud...</div>

<!-- zoom controls -->
<div class="a" style="left:318px;top:904px;width:67px;height:40px;background:#fff;border-radius:2px"></div>
<svg class="a" style="left:321px;top:913px" width="14" height="14" viewBox="0 0 14 14" fill="none" stroke="#2f4a66" stroke-width="1.6"><path d="M1 5V1H5M9 1H13V5M13 9V13H9M5 13H1V9"/></svg>
<svg class="a" style="left:346px;top:912px" width="15" height="15" viewBox="0 0 15 15" fill="none" stroke="#2f4a66" stroke-width="1.6"><circle cx="8" cy="6" r="4.5"/><path d="M11 9.5L14 13M0 6H3"/></svg>
<svg class="a" style="left:371px;top:912px" width="15" height="15" viewBox="0 0 15 15" fill="none" stroke="#2f4a66" stroke-width="1.6"><circle cx="8" cy="6" r="4.5"/><path d="M11 9.5L14 13M0 6H4M2 4V8"/></svg>

<!-- right pane nodes -->
<div class="num" style="left:1627px;top:97px">94.</div><div class="ic gray" style="left:1661px;top:96px"><svg viewBox="0 0 20 20"><path d="M5 2 H12 L16 6 V18 H5 Z" fill="none" stroke="#fff" stroke-width="1.6"/></svg></div>
<div class="t d" style="left:1592px;top:135px">File: Create</div><div class="s v" style="left:1592px;top:148px">'$sLogFolder$/$sCurrentDate...</div>
<div class="num" style="left:1627px;top:184px">95.</div><div class="ic gray" style="left:1661px;top:183px"><svg viewBox="0 0 20 20"><path d="M5 2 H12 L16 6 V18 H5 Z" fill="#fff"/><text x="5.6" y="13" font-size="4.5" fill="#6f8591" font-family="Liberation Sans">LOG</text></svg></div>
<div class="t d" style="left:1592px;top:222px">Log to file</div><div class="s d" style="left:1592px;top:235px">'Date,System,TaskName,Error...</div>
<div class="num" style="left:1627px;top:292px">96.</div><div class="ic gray" style="left:1661px;top:291px"><svg viewBox="0 0 20 20" fill="none" stroke="#fff" stroke-width="1.5"><rect x="3" y="4" width="14" height="13" rx="1"/><path d="M3 7.5H17M6 2.5V5M14 2.5V5"/><path d="M6 10.5h1.5M9.3 10.5h1.5M12.6 10.5h1.5M6 13.5h1.5M9.3 13.5h1.5M12.6 13.5h1.5" stroke-width="1.8"/></svg></div>
<div class="t d" style="left:1592px;top:331px">Datetime: To string</div><div class="s" style="left:1592px;top:344px">Convert <span class="v">$System:Date$</span> and a...</div>
<div class="num" style="left:1627px;top:379px">97.</div><div class="ic gray" style="left:1661px;top:378px"><svg viewBox="0 0 20 20" stroke="#fff" stroke-width="2.6"><path d="M7 2V18M13 2V18M2 7H18M2 13H18"/></svg></div>
<div class="t d" style="left:1592px;top:418px">Number: To string</div><div class="s" style="left:1592px;top:431px">convert <span class="v">$nErrorLineNumber$</span> ...</div>
<div class="num" style="left:1627px;top:466px">98.</div><div class="ic grn" style="left:1661px;top:465px"><svg viewBox="0 0 20 20"><path d="M3 3 H17 V14 H14 V17 L11 14 H3 Z" fill="#fff"/><text x="6" y="12" font-size="8" font-style="italic" font-weight="bold" fill="#3a8a35" font-family="Liberation Sans">//</text></svg></div>
<div class="t g" style="left:1592px;top:505px">Comment</div><div class="s g" style="left:1592px;top:518px">'Logging error to file matchin...</div>
<div class="num" style="left:1627px;top:553px">99.</div><div class="ic gray" style="left:1661px;top:552px"><svg viewBox="0 0 20 20"><path d="M5 2 H12 L16 6 V18 H5 Z" fill="#fff"/><text x="5.6" y="13" font-size="4.5" fill="#6f8591" font-family="Liberation Sans">LOG</text></svg></div>
<div class="t d" style="left:1592px;top:592px">Log to file</div><div class="s d" style="left:1592px;top:605px">'$sDateTime$,$System:Machi...</div>
<div class="num" style="left:1627px;top:663px">100.</div><div class="ic orng" style="left:1661px;top:662px"><svg viewBox="0 0 20 20"><rect x="3.5" y="3.5" width="13" height="13" rx="2" fill="none" stroke="#fff" stroke-width="2"/></svg></div>
<div class="t o" style="left:1592px;top:700px">Step</div><div class="s d" style="left:1592px;top:714px">'Record Snapshot'</div>
<div class="num" style="left:1627px;top:749px">101.</div><div class="ic grn" style="left:1661px;top:748px"><svg viewBox="0 0 20 20"><path d="M3 3 H17 V14 H14 V17 L11 14 H3 Z" fill="#fff"/><text x="6" y="12" font-size="8" font-style="italic" font-weight="bold" fill="#3a8a35" font-family="Liberation Sans">//</text></svg></div>
<div class="t g" style="left:1592px;top:788px">Comment</div><div class="s g" style="left:1592px;top:801px">'Taking snapshot. Please disa...</div>
<div class="num" style="left:1627px;top:837px">102.</div><div class="ic gray" style="left:1661px;top:836px"><svg viewBox="0 0 20 20"><path d="M3 6 H7 L8.5 4 H11.5 L13 6 H17 V16 H3 Z" fill="#fff"/><circle cx="10" cy="11" r="2.5" fill="none" stroke="#6f8591" stroke-width="1.2"/></svg></div>
<div class="t d" style="left:1592px;top:875px">Screen: Capture desktop</div><div class="s" style="left:1592px;top:888px">screenshot and save the imag...</div>

<div class="a" style="left:0;top:945px;width:1918px;height:3px;background:#2b2b2b"></div>
</body></html>
